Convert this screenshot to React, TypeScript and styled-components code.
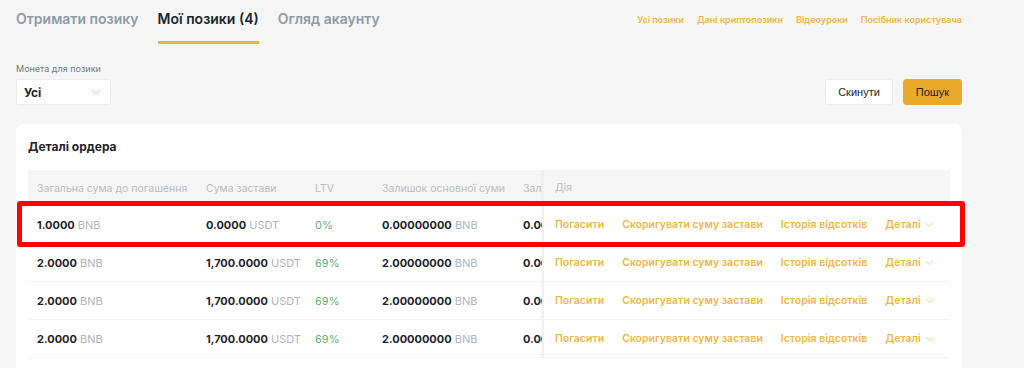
import React from "react";
import styled, { createGlobalStyle } from "styled-components";

const Global = createGlobalStyle`
  html, body { margin: 0; padding: 0; background: #f5f5f5; }
  body { font-family: Inter, "Noto Sans", sans-serif; color: #1e2329; }
  * { box-sizing: border-box; }
`;

const Page = styled.div`
  padding: 0 62px 0 16px;
  width: 1024px;
  height: 368px;
  overflow: hidden;
`;

const TopBar = styled.div`
  display: flex;
  justify-content: space-between;
  align-items: flex-start;
`;

const Tabs = styled.div`
  display: flex;
  gap: 19px;
`;

const Tab = styled.div<{ $active?: boolean }>`
  font-size: 14px;
  font-weight: 600;
  height: 44px;
  padding-top: 10px;
  color: ${(p) => (p.$active ? "#1e2329" : "#929aa5")};
  border-bottom: 3px solid ${(p) => (p.$active ? "#e8b83d" : "transparent")};
`;

const Links = styled.div`
  display: flex;
  gap: 13px;
  padding-top: 14px;
`;

const Link = styled.a`
  font-size: 9px;
  font-weight: 600;
  color: #f0b646;
`;

const FilterRow = styled.div`
  display: flex;
  justify-content: space-between;
  align-items: flex-end;
  margin-top: 19px;
`;

const Field = styled.div`
  display: flex;
  flex-direction: column;
  gap: 5px;
`;

const Label = styled.div`
  font-size: 9px;
  color: #707a8a;
`;

const Select = styled.div`
  width: 95px;
  height: 26px;
  background: #fff;
  border: 1px solid #eaecef;
  border-radius: 3px;
  display: flex;
  align-items: center;
  justify-content: space-between;
  padding: 0 9px 0 7px;
  font-size: 12px;
  font-weight: 700;
`;

const Buttons = styled.div`
  display: flex;
  gap: 10px;
`;

const Button = styled.button<{ $primary?: boolean }>`
  height: 26px;
  padding: 0 12px;
  border-radius: 3px;
  font-family: "Liberation Sans", Arial, sans-serif;
  font-size: 11px;
  color: #1e2329;
  border: 1px solid ${(p) => (p.$primary ? "#e9a92b" : "#eaecef")};
  background: ${(p) => (p.$primary ? "#e9a92b" : "#fff")};
`;

const Card = styled.div`
  position: relative;
  margin-top: 19px;
  background: #fff;
  border-radius: 8px;
  padding: 12px 12px 0 12px;
  height: 260px;
`;

const Title = styled.div`
  font-size: 12px;
  font-weight: 700;
  height: 34px;
  padding-top: 3px;
`;

const Table = styled.div`
  display: flex;
`;

const ScrollPart = styled.div`
  width: 514px;
  overflow: hidden;
`;

const FixedPart = styled.div`
  flex: 1;
  border-left: 2px solid #efeff5;
  box-shadow: -1px 0 2px rgba(0, 0, 0, 0.03);
`;

const Row = styled.div<{ $head?: boolean }>`
  display: flex;
  align-items: center;
  white-space: nowrap;
  height: ${(p) => (p.$head ? "36px" : "38px")};
  background: ${(p) => (p.$head ? "#f5f5f5" : "#fff")};
  border-bottom: 1px solid ${(p) => (p.$head ? "#f5f5f5" : "#f3f3f3")};
  font-size: 11px;
`;

const Cell = styled.div<{ $w: number; $pl?: number }>`
  flex: 0 0 ${(p) => p.$w}px;
  padding-left: ${(p) => p.$pl ?? 0}px;
  overflow: hidden;
`;

const Head = styled.span`
  font-size: 10.5px;
  color: #b7bdc6;
`;

const Val = styled.span`
  font-weight: 700;
  color: #1e2329;
`;

const Unit = styled.span`
  color: #aeb4bc;
`;

const Ltv = styled.span`
  color: #5fae7a;
`;

const Actions = styled.div`
  display: flex;
  gap: 18px;
  padding-left: 11px;
  align-items: center;
`;

const Action = styled.span`
  font-size: 10.5px;
  font-weight: 600;
  color: #f0b646;
  display: inline-flex;
  align-items: center;
  gap: 4px;
`;

const Highlight = styled.div`
  position: absolute;
  left: 1px;
  top: 77px;
  width: 948px;
  height: 46px;
  border: 5px solid #ff0000;
  border-radius: 3px;
  pointer-events: none;
`;

const Chevron = ({ color = "#c4c8ce", size = 10 }: { color?: string; size?: number }) => (
  <svg width={size} height={size * 0.6} viewBox="0 0 10 6" fill="none">
    <path d="M1 1l4 4 4-4" stroke={color} strokeWidth="1" />
  </svg>
);

const widths = [178, 109, 67, 141, 19];

const rows = [
  { a: "1.0000", b: "0.0000", c: "0%", d: "0.00000000" },
  { a: "2.0000", b: "1,700.0000", c: "69%", d: "2.00000000" },
  { a: "2.0000", b: "1,700.0000", c: "69%", d: "2.00000000" },
  { a: "2.0000", b: "1,700.0000", c: "69%", d: "2.00000000" },
];

export default function App() {
  return (
    <Page>
      <Global />
      <TopBar>
        <Tabs>
          <Tab>Отримати позику</Tab>
          <Tab $active>Мої позики (4)</Tab>
          <Tab>Огляд акаунту</Tab>
        </Tabs>
        <Links>
          <Link>Усі позики</Link>
          <Link>Дані криптопозики</Link>
          <Link>Відеоуроки</Link>
          <Link>Посібник користувача</Link>
        </Links>
      </TopBar>
      <FilterRow>
        <Field>
          <Label>Монета для позики</Label>
          <Select>
            <span>Усі</span>
            <Chevron />
          </Select>
        </Field>
        <Buttons>
          <Button>Скинути</Button>
          <Button $primary>Пошук</Button>
        </Buttons>
      </FilterRow>
      <Card>
        <Title>Деталі ордера</Title>
        <Table>
          <ScrollPart>
            <Row $head>
              <Cell $w={widths[0]} $pl={9}><Head>Загальна сума до погашення</Head></Cell>
              <Cell $w={widths[1]}><Head>Сума застави</Head></Cell>
              <Cell $w={widths[2]}><Head>LTV</Head></Cell>
              <Cell $w={widths[3]}><Head>Залишок основної суми</Head></Cell>
              <Cell $w={widths[4]}><Head>Залишок відсотків</Head></Cell>
            </Row>
            {rows.map((r, i) => (
              <Row key={i}>
                <Cell $w={widths[0]} $pl={9}><Val>{r.a}</Val> <Unit>BNB</Unit></Cell>
                <Cell $w={widths[1]}><Val>{r.b}</Val> <Unit>USDT</Unit></Cell>
                <Cell $w={widths[2]}><Ltv>{r.c}</Ltv></Cell>
                <Cell $w={widths[3]}><Val>{r.d}</Val> <Unit>BNB</Unit></Cell>
                <Cell $w={widths[4]}><Val>0.00000000</Val></Cell>
              </Row>
            ))}
          </ScrollPart>
          <FixedPart>
            <Row $head>
              <Actions><Head>Дія</Head></Actions>
            </Row>
            {rows.map((_, i) => (
              <Row key={i}>
                <Actions>
                  <Action>Погасити</Action>
                  <Action>Скоригувати суму застави</Action>
                  <Action>Історія відсотків</Action>
                  <Action>Деталі <Chevron color="#f3c97a" size={9} /></Action>
                </Actions>
              </Row>
            ))}
          </FixedPart>
        </Table>
        <Highlight />
      </Card>
    </Page>
  );
}
